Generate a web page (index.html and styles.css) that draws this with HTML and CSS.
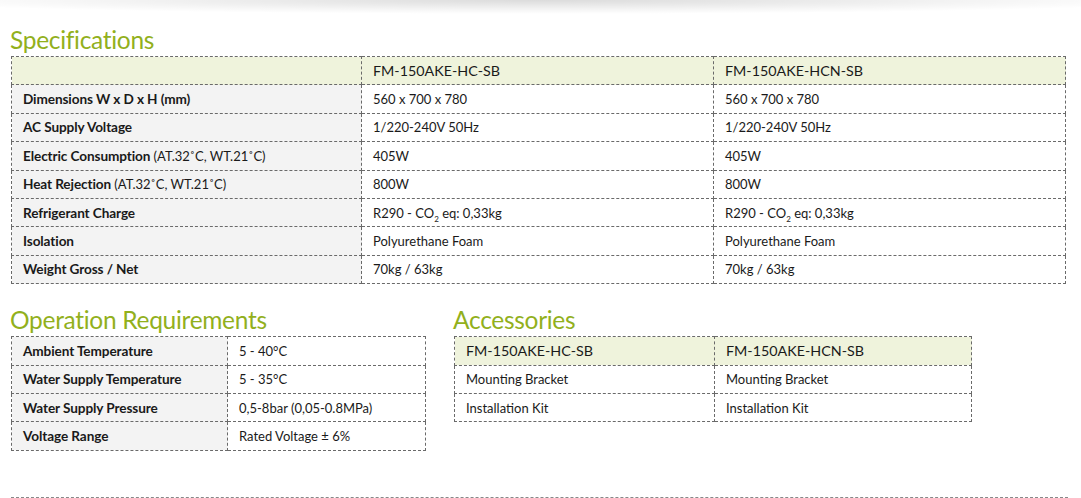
FILE: index.html
```html
<!DOCTYPE html>
<html>
<head>
<meta charset="utf-8">
<link rel="stylesheet" href="styles.css">
</head>
<body>
<div class="shadow"></div>
<div class="page">
  <h2 class="title">Specifications</h2>
  <table class="tbl spec">
    <colgroup><col class="c1"><col class="c2"><col class="c3"></colgroup>
    <tr class="head"><td></td><td>FM-150AKE-HC-SB</td><td>FM-150AKE-HCN-SB</td></tr>
    <tr><th>Dimensions W x D x H (mm)</th><td>560 x 700 x 780</td><td>560 x 700 x 780</td></tr>
    <tr><th>AC Supply Voltage</th><td>1/220-240V 50Hz</td><td>1/220-240V 50Hz</td></tr>
    <tr><th>Electric Consumption <span class="note">(AT.32˚C, WT.21˚C)</span></th><td>405W</td><td>405W</td></tr>
    <tr><th>Heat Rejection <span class="note">(AT.32˚C, WT.21˚C)</span></th><td>800W</td><td>800W</td></tr>
    <tr><th>Refrigerant Charge</th><td>R290 - CO<sub>2</sub> eq: 0,33kg</td><td>R290 - CO<sub>2</sub> eq: 0,33kg</td></tr>
    <tr><th>Isolation</th><td>Polyurethane Foam</td><td>Polyurethane Foam</td></tr>
    <tr><th>Weight Gross / Net</th><td>70kg / 63kg</td><td>70kg / 63kg</td></tr>
  </table>
  <div class="lower">
    <div class="block ops">
      <h2 class="title">Operation Requirements</h2>
      <table class="tbl">
        <colgroup><col class="o1"><col class="o2"></colgroup>
        <tr><th>Ambient Temperature</th><td>5 - 40°C</td></tr>
        <tr><th>Water Supply Temperature</th><td>5 - 35°C</td></tr>
        <tr><th>Water Supply Pressure</th><td>0,5-8bar (0,05-0.8MPa)</td></tr>
        <tr><th>Voltage Range</th><td>Rated Voltage ± 6%</td></tr>
      </table>
    </div>
    <div class="block acc">
      <h2 class="title">Accessories</h2>
      <table class="tbl">
        <colgroup><col class="a1"><col class="a2"></colgroup>
        <tr class="head"><td>FM-150AKE-HC-SB</td><td>FM-150AKE-HCN-SB</td></tr>
        <tr><td>Mounting Bracket</td><td>Mounting Bracket</td></tr>
        <tr><td>Installation Kit</td><td>Installation Kit</td></tr>
      </table>
    </div>
  </div>
  <div class="rule"></div>
</div>
</body>
</html>
```

FILE: styles.css
```css
html, body {
  margin: 0;
  padding: 0;
  background: #fff;
}
body {
  font-family: Lato, "Open Sans", sans-serif;
  color: #1a1a1a;
}
.shadow {
  height: 14px;
  background: radial-gradient(ellipse 60% 100% at 50% 0%, rgba(0,0,0,0.14), rgba(0,0,0,0.04) 70%, rgba(0,0,0,0) 100%);
}
.page {
  padding: 0 16px 0 11px;
}
.title {
  margin: 0;
  font-weight: 400;
  font-size: 24.5px;
  line-height: 28px;
  color: #92b01c;
  letter-spacing: -0.3px;
  margin-left: -1px;
}
.page > .title {
  margin-top: 12px;
  margin-bottom: 2px;
}
.tbl {
  border-collapse: collapse;
  table-layout: fixed;
  font-size: 13px;
}
.tbl th, .tbl td {
  border: 1px dashed #6a6a6a;
  height: 28.4px;
  padding: 0 11px;
  text-align: left;
  white-space: nowrap;
  box-sizing: border-box;
}
.tbl th {
  background: #f3f3f3;
  font-weight: 700;
  font-size: 13.6px;
  letter-spacing: -0.1px;
}
.tbl .note {
  font-weight: 400;
  font-size: 13px;
  letter-spacing: 0;
}
.tbl .head td {
  background: #eff3dc;
  font-size: 14.3px;
}
.tbl sub {
  font-size: 8px;
  line-height: 0;
}
.spec {
  width: 1054px;
}
.c1 { width: 350px; }
.c2 { width: 352px; }
.c3 { width: 352px; }
.lower {
  display: flex;
  gap: 28px;
  margin-top: 22px;
}
.ops .tbl { width: 414px; }
.o1 { width: 216px; }
.o2 { width: 198px; }
.acc .tbl { width: 517px; }
.a1 { width: 260px; }
.a2 { width: 257px; }
.block .title {
  margin-bottom: 2px;
}
.rule {
  margin-top: 46px;
  border-top: 1px dashed #888;
  width: 1057px;
}
```
